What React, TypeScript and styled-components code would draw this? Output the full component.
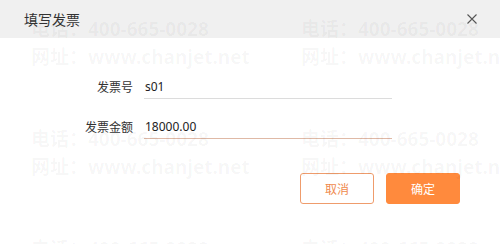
import React from "react";
import styled, { createGlobalStyle } from "styled-components";

const Global = createGlobalStyle`
  html, body { margin: 0; padding: 0; background: #fff; }
  body { font-family: "Noto Sans", "Noto Sans CJK SC", sans-serif; }
  * { box-sizing: border-box; }
`;

const Dialog = styled.div`
  position: relative;
  width: 500px;
  height: 244px;
  background: #fff;
  overflow: hidden;
  display: flex;
  flex-direction: column;
`;

const Header = styled.div`
  height: 38px;
  background: #f0f0f0;
  display: flex;
  align-items: center;
  justify-content: space-between;
  padding: 0 23px 0 24px;
`;

const Title = styled.div`
  font-size: 14px;
  color: #333;
  font-family: "Noto Sans CJK SC", sans-serif;
`;

const Close = styled.button`
  border: 0;
  background: transparent;
  padding: 0;
  width: 10px;
  height: 10px;
  display: flex;
  cursor: pointer;
`;

const Form = styled.div`
  display: flex;
  flex-direction: column;
  gap: 15px;
  padding: 36px 0 0 0;
`;

const Row = styled.div`
  display: flex;
  align-items: center;
  gap: 11px;
`;

const Label = styled.label`
  width: 133px;
  text-align: right;
  font-size: 12px;
  color: #333;
  font-family: "Noto Sans CJK SC", sans-serif;
`;

const Input = styled.div<{ $focused?: boolean }>`
  width: 248px;
  height: 25px;
  padding-left: 1px;
  display: flex;
  align-items: center;
  font-size: 12px;
  color: #222;
  font-family: "Noto Sans", "Noto Sans CJK SC", sans-serif;
  border-bottom: 1px solid ${(p) => (p.$focused ? "#dfb9a6" : "#dcdcdc")};
`;

const Actions = styled.div`
  display: flex;
  justify-content: flex-end;
  gap: 12px;
  padding: 34px 40px 0 0;
`;

const Button = styled.button<{ $primary?: boolean }>`
  width: 74px;
  height: 31px;
  border-radius: 3px;
  font-size: 12px;
  font-family: "Noto Sans CJK SC", sans-serif;
  cursor: pointer;
  border: 1px solid ${(p) => (p.$primary ? "#ff8a3d" : "#ef9c6c")};
  background: ${(p) => (p.$primary ? "#ff8a3d" : "#fff")};
  color: ${(p) => (p.$primary ? "#fff" : "#ef8a4e")};
`;

const Watermark = styled.div`
  position: absolute;
  inset: 0;
  pointer-events: none;
  overflow: hidden;
  padding: 15px 0 0 31px;
  display: grid;
  grid-template-columns: repeat(2, 270px);
  grid-auto-rows: 110px;
  align-content: start;
`;

const Tile = styled.div`
  font-size: 19px;
  font-weight: 700;
  line-height: 28px;
  color: rgba(0, 0, 0, 0.04);
  white-space: nowrap;
  font-family: "Noto Sans", "Noto Sans CJK SC", sans-serif;
`;

export default function App() {
  const tiles = Array.from({ length: 6 });
  return (
    <>
      <Global />
      <Dialog>
        <Header>
          <Title>填写发票</Title>
          <Close aria-label="关闭">
            <svg width="10" height="10" viewBox="0 0 10 10">
              <path d="M0.5 0.5 L9.5 9.5 M9.5 0.5 L0.5 9.5" stroke="#555" strokeWidth="1.1" fill="none" />
            </svg>
          </Close>
        </Header>
        <Form>
          <Row>
            <Label>发票号</Label>
            <Input>s01</Input>
          </Row>
          <Row>
            <Label>发票金额</Label>
            <Input $focused>18000.00</Input>
          </Row>
        </Form>
        <Actions>
          <Button>取消</Button>
          <Button $primary>确定</Button>
        </Actions>
        <Watermark>
          {tiles.map((_, i) => (
            <Tile key={i}>
              <div>电话：400-665-0028</div>
              <div>网址：www.chanjet.net</div>
            </Tile>
          ))}
        </Watermark>
      </Dialog>
    </>
  );
}
